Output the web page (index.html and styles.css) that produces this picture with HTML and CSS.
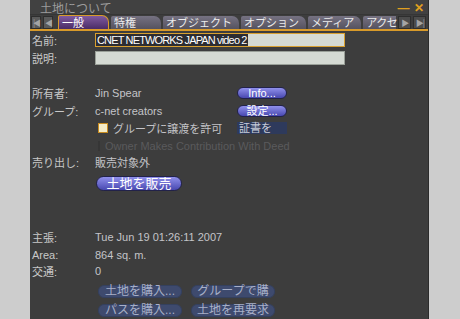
FILE: index.html
```
<!DOCTYPE html>
<html lang="ja">

<head>
  <meta charset="UTF-8">
  <title>土地について</title>
  <link rel="stylesheet" href="styles.css">
</head>

<body>
  <div class="window">
    <div class="titlebar">
      <span class="title">土地について</span>
      <span class="ctrl min">—</span>
      <span class="ctrl close">✕</span>
    </div>

    <div class="tabbar">
      <span class="arrow">|&#9664;</span>
      <span class="arrow">&#9664;</span>
      <span class="tab active">一般</span>
      <span class="tab">特権</span>
      <span class="tab">オブジェクト</span>
      <span class="tab">オプション</span>
      <span class="tab">メディア</span>
      <span class="tab cut">アクセ</span>
      <span class="arrow right">&#9654;</span>
      <span class="arrow right">&#9654;|</span>
    </div>

    <div class="panel">
      <div class="row">
        <span class="label">名前:</span>
        <span class="field gold"><span class="sel">CNET NETWORKS JAPAN video 2</span></span>
      </div>
      <div class="row">
        <span class="label">説明:</span>
        <span class="field"></span>
      </div>

      <div class="row owner">
        <span class="label">所有者:</span>
        <span class="value">Jin Spear</span>
        <span class="btn">Info...</span>
      </div>
      <div class="row short">
        <span class="label">グループ:</span>
        <span class="value">c-net creators</span>
        <span class="btn">設定...</span>
      </div>
      <div class="row">
        <span class="label"></span>
        <span class="check"><span class="box on"></span>グループに譲渡を許可</span>
        <span class="btn flat">証書を</span>
      </div>
      <div class="row short">
        <span class="label"></span>
        <span class="check off"><span class="box"></span>Owner Makes Contribution With Deed</span>
      </div>

      <div class="row sale">
        <span class="label">売り出し:</span>
        <span class="value">販売対象外</span>
      </div>
      <div class="row sell">
        <span class="label"></span>
        <span class="btn big">土地を販売</span>
      </div>

      <div class="row claim">
        <span class="label">主張:</span>
        <span class="value wide">Tue Jun 19 01:26:11 2007</span>
      </div>
      <div class="row short">
        <span class="label">Area:</span>
        <span class="value">864 sq. m.</span>
      </div>
      <div class="row traffic">
        <span class="label">交通:</span>
        <span class="value">0</span>
      </div>

      <div class="buttons">
        <span class="btn dim">土地を購入...</span>
        <span class="btn dim">グループで購</span>
        <span class="btn dim">パスを購入...</span>
        <span class="btn dim">土地を再要求</span>
      </div>
    </div>
  </div>
</body>

</html>
```

FILE: styles.css
```
* {
  box-sizing: border-box;
  margin: 0;
  padding: 0;
}

body {
  background-color: #cdcdcd;
  font-family: 'Liberation Sans', 'Noto Sans CJK JP', sans-serif;
  font-size: 11px;
  color: #c4c4c8;
  overflow: hidden;
}

.window {
  margin-left: 30px;
  width: 399px;
  height: 319px;
  background-color: #3d3d3d;
  border-right: 1px solid #2c2c2c;
  overflow: hidden;
}

.titlebar {
  height: 15px;
  display: flex;
  align-items: center;
  padding: 2px 0 0 10px;
  background-color: #414141;
  border-bottom: 1px solid #363636;
}

.title {
  flex: 1;
  font-size: 12px;
  line-height: 12px;
  color: #9c9c9c;
  font-family: 'Noto Sans CJK JP', sans-serif;
}

.ctrl {
  color: #e0a020;
  font-weight: bold;
  font-size: 12px;
  line-height: 12px;
  width: 15px;
  text-align: center;
}

.close {
  margin-right: 2px;
}

.tabbar {
  height: 16px;
  display: flex;
  align-items: flex-end;
  gap: 2px;
  padding-left: 1px;
  border-bottom: 2px solid #d89a2a;
  font-family: 'Noto Sans CJK JP', sans-serif;
  white-space: nowrap;
}

.arrow {
  flex: none;
  width: 10px;
  height: 13px;
  background-color: #5a5a5a;
  border: 1px solid #2e2e2e;
  color: #a4a4a4;
  font-size: 8px;
  line-height: 11px;
  text-align: center;
  letter-spacing: -2px;
}

.arrow.right {
  width: 13px;
  letter-spacing: -1px;
  background-color: #4c4c4c;
}

.tab {
  flex: none;
  min-width: 50px;
  height: 13px;
  line-height: 13px;
  padding: 0 7px 0 3px;
  color: #ececec;
  font-size: 11px;
  background: linear-gradient(#767282, #55525f);
  border-top-left-radius: 2px;
  border-top-right-radius: 7px;
}

.tab.active {
  width: 51px;
  margin-left: 3px;
  height: 14px;
  background: linear-gradient(#805aa0, #4a2c66);
  border: 1px solid #d89a2a;
  border-bottom: none;
  color: #fff;
}

.tab.cut {
  min-width: 0;
  width: 33px;
  padding-right: 0;
  border-top-right-radius: 0;
  letter-spacing: -0.5px;
}

.panel {
  padding-left: 2px;
}

.row {
  display: flex;
  align-items: center;
  height: 18px;
}

.row.short {
  height: 17px;
}

.label {
  width: 63px;
  flex-shrink: 0;
  color: #c8c8c8;
}

.field {
  width: 250px;
  height: 14px;
  background-color: #d5dad3;
  border: 1px solid #9aa098;
  font-size: 11px;
  line-height: 12px;
  color: #fff;
  white-space: nowrap;
}

.field.gold {
  border-color: #d8a030;
}

.sel {
  display: inline-block;
  background-color: #2c2c32;
  padding: 0 1px;
  letter-spacing: -0.85px;
}

.value {
  width: 142px;
  flex-shrink: 0;
}

.value.wide {
  width: 200px;
}

.owner {
  margin-top: 17px;
}

.btn {
  width: 50px;
  height: 12px;
  border-radius: 6px;
  background: linear-gradient(#9090ec, #4848b0);
  border: 1px solid #22224a;
  color: #fff;
  font-size: 11px;
  line-height: 10px;
  text-align: center;
  white-space: nowrap;
}

.btn.flat {
  border-radius: 0;
  background: #2e3a5c;
  border-color: #2e3a5c;
  color: #c8ccd8;
  text-align: left;
  padding-left: 1px;
}

.check {
  width: 142px;
  display: flex;
  align-items: center;
  gap: 5px;
  white-space: nowrap;
  padding-left: 3px;
}

.check.off {
  color: #5a5a5c;
}

.box {
  width: 10px;
  height: 10px;
  background-color: #4e4e4e;
  border: 1px solid #363636;
}

.box.on {
  background-color: #f4ecc8;
  border-color: #c88c20;
}

.sale {
  height: 15px;
}

.sell {
  height: 28px;
}

.btn.big {
  width: 86px;
  height: 15px;
  margin-left: 1px;
  font-size: 13px;
  line-height: 13px;
  border-radius: 8px;
}

.claim {
  margin-top: 30px;
  height: 19px;
}

.traffic {
  height: 16px;
}

.buttons {
  margin: 6px 0 0 66px;
  display: grid;
  grid-template-columns: 84px 84px;
  gap: 6px 9px;
}

.btn.dim {
  width: 84px;
  height: 13px;
  background: #3e4a6e;
  border-color: #34405e;
  color: #a8b0c8;
  font-size: 12px;
  line-height: 11px;
}
```
